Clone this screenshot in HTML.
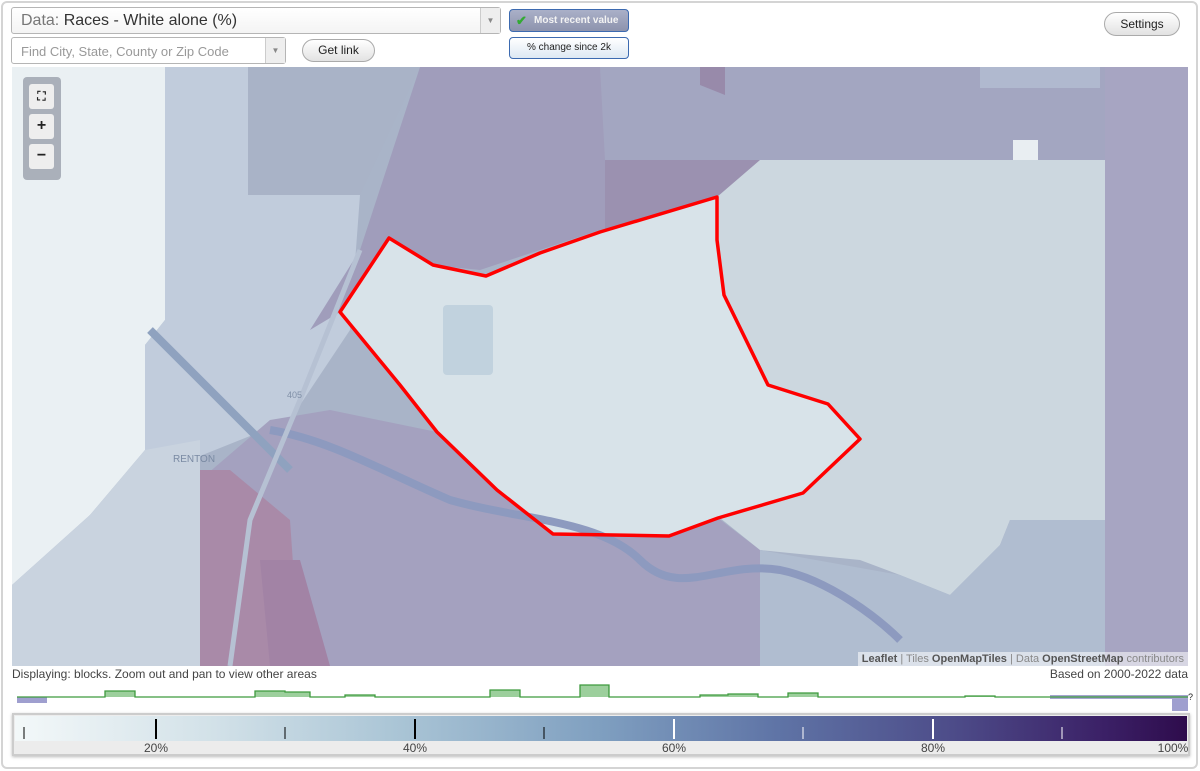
<!DOCTYPE html>
<html><head><meta charset="utf-8"><style>
*{box-sizing:border-box;margin:0;padding:0}
body{width:1200px;height:771px;background:#fff;font-family:"Liberation Sans",Arial,sans-serif;position:relative;overflow:hidden}
.frame{position:absolute;left:1px;top:1px;width:1197px;height:768px;border:2px solid #d4d4d4;border-radius:6px}
.sel{position:absolute;left:11px;top:7px;width:490px;height:27px;border:1px solid #b5b5b5;border-radius:3px;background:linear-gradient(#fff,#f4f4f4);font-size:16px;color:#333;padding:4px 9px}
.sel .lab{color:#777}
.arr{position:absolute;right:0;top:0;width:20px;height:100%;border-left:1px solid #ccc;background:#eee;color:#888;font-size:8px;text-align:center;line-height:25px}
.find{position:absolute;left:11px;top:37px;width:275px;height:27px;border:1px solid #b5b5b5;border-radius:3px;background:#fff;font-size:13px;color:#999;padding:6px 9px}
.btn{position:absolute;border:1px solid #aaa;border-radius:12px;background:linear-gradient(#fff,#e2e2e2);font-size:12px;color:#222;text-align:center}
.mrv{position:absolute;left:509px;top:9px;width:120px;height:23px;border:1px solid #3c6ab0;border-radius:4px;background:linear-gradient(#aab0c8,#8d93ad);color:#f3f3f3;font-size:10px;font-weight:bold;line-height:21px;padding-left:24px}
.pc{position:absolute;left:509px;top:37px;width:120px;height:22px;border:1px solid #3c6ab0;border-radius:4px;background:linear-gradient(#fff,#dde8f3);font-size:10px;color:#222;text-align:center;line-height:20px}
.ctl{position:absolute;left:23px;top:77px;width:38px;height:103px;background:#aab0ba;border-radius:4px}
.ctl div{position:absolute;left:6px;width:25px;height:25px;background:#eee;border-radius:3px;text-align:center;font-weight:bold;font-size:16px;line-height:24px;color:#222}
.attr{position:absolute;right:12px;top:652px;height:14px;background:rgba(255,255,255,.55);font-size:11px;color:#888;padding:0 4px;line-height:14px}
.attr b{color:#555;font-weight:bold}
</style></head><body>
<div class="frame"></div>
<svg style="position:absolute;left:12px;top:67px" width="1176" height="599" viewBox="12 67 1176 599">
<rect x="12" y="67" width="1176" height="599" fill="#a9b4c8"/>
<polygon points="12,67 165,67 165,320 145,345 145,450 90,515 12,585" fill="#eaf0f3"/>
<polygon points="165,67 248,67 248,195 360,195 350,330 290,420 165,470 145,450 145,345 165,320" fill="#c1ccdc"/>
<polygon points="12,585 90,515 145,450 200,440 200,666 12,666" fill="#c9d3df"/>
<polygon points="420,67 605,67 605,160 760,160 740,195 600,230 540,250 480,270 430,265 390,238 340,312 310,330 360,250" fill="#a09dbb"/>
<polygon points="600,67 1105,67 1105,160 760,160 605,160" fill="#a3a6c1"/>
<polygon points="605,160 760,160 740,197 650,215 605,230" fill="#9b91b0"/>
<polygon points="700,67 725,67 725,95 700,85" fill="#988aaa"/>
<polygon points="1105,67 1188,67 1188,666 1105,666" fill="#a7a5c2"/>
<polygon points="980,67 1100,67 1100,88 980,88" fill="#b0b9cf"/>
<rect x="1013" y="140" width="25" height="20" fill="#e9eef2"/>
<polygon points="248,67 420,67 360,195 248,195" fill="#a9b3c7"/>
<polygon points="270,420 330,410 437,432 497,490 553,534 669,536 718,518 760,550 900,600 940,666 200,666 200,480" fill="#a4a1bf"/>
<polygon points="200,470 230,470 290,520 300,666 200,666" fill="#a98aa8"/>
<polygon points="260,560 300,560 330,666 270,666" fill="#a283a5"/>
<polygon points="760,160 780,160 1105,160 1105,520 1010,520 1000,545 950,595 900,575 860,560 760,550 720,518 803,493 860,439 828,404 768,385 724,295 717,240 717,197" fill="#ccd7df"/>
<polygon points="760,550 900,575 950,595 1000,545 1010,520 1105,520 1105,666 760,666" fill="#b0bdd0"/>
<polygon points="389,238 433,265 486,276 540,253 600,232 717,197 717,240 724,295 768,385 828,404 860,439 803,493 718,518 669,536 553,534 497,490 437,432 400,385 340,312" fill="#d8e3e9"/>
<rect x="443" y="305" width="50" height="70" rx="4" fill="#c1d2de"/>
<path d="M270,430 C330,440 380,470 450,500 C520,520 600,520 640,560 C680,600 720,560 780,570 C830,580 880,620 900,640" stroke="#8d9abf" stroke-width="8" fill="none"/>
<path d="M150,330 L290,470" stroke="#8fa2bf" stroke-width="8" fill="none"/>
<path d="M360,250 L300,400 L250,520 L230,666" stroke="#b6c1d3" stroke-width="5" fill="none"/>
<polygon points="389,238 433,265 486,276 540,253 600,232 717,197 717,240 724,295 768,385 828,404 860,439 803,493 718,518 669,536 553,534 497,490 437,432 400,385 340,312" fill="none" stroke="#ff0000" stroke-width="3.5" stroke-linejoin="round"/>
<text x="173" y="462" font-size="10" fill="#7a8aa3" font-family="Liberation Sans">RENTON</text>
<text x="287" y="398" font-size="9" fill="#8090a8" font-family="Liberation Sans">405</text>
</svg>
<div class="ctl"><div style="top:7px;font-size:12px">⛶</div><div style="top:37px">+</div><div style="top:67px">−</div></div>
<div class="attr"><b>Leaflet</b> | Tiles <b>OpenMapTiles</b> | Data <b>OpenStreetMap</b> contributors</div>
<div class="sel"><span class="lab">Data:</span> Races - White alone (%)<div class="arr">▼</div></div>
<div class="find">Find City, State, County or Zip Code<div class="arr">▼</div></div>
<div class="btn" style="left:302px;top:39px;width:73px;height:23px;line-height:21px">Get link</div>
<div class="btn" style="left:1104px;top:12px;width:76px;height:24px;line-height:22px">Settings</div>
<div class="mrv"><span style="position:absolute;left:6px;top:0;color:#3a3;font-size:13px">✔</span>Most recent value</div>
<div class="pc">% change since 2k</div>
<div style="position:absolute;left:12px;top:667px;font-size:12px;color:#444">Displaying: blocks. Zoom out and pan to view other areas</div>
<div style="position:absolute;right:12px;top:667px;font-size:12px;color:#444">Based on 2000-2022 data</div>
<svg style="position:absolute;left:0;top:680px" width="1200" height="32">
<rect x="17" y="17" width="30" height="6" fill="#9f9fcf"/>
<rect x="1172" y="17" width="16" height="14" fill="#9f9fcf"/>
<polyline points="1050,17 1188,17" stroke="#a5a5d0" stroke-width="4"/>
<g fill="#9ccf9c" stroke="#3e9a3e" stroke-width="1.3">
<path d="M17,17 H105 V11 H135 V17 H255 V11 H285 V12 H310 V17 H345 V15 H375 V17 H490 V10 H520 V17 H580 V5 H609 V17 H700 V15 H728 V14 H758 V17 H788 V13 H818 V17 H965 V16 H995 V17 H1188"/>
</g>
<text x="1188" y="20" font-size="9" fill="#222">?</text>
</svg>
<div style="position:absolute;left:12px;top:713px;width:1178px;height:43px;border:2px solid #ccc;background:#ececec;box-shadow:0 1px 3px #bbb">
<div style="position:absolute;left:1px;top:1px;right:1px;height:25px;background:linear-gradient(90deg,#f3f8f9 0%,#d2e1e8 17%,#a9c4d5 33%,#7f9fc0 50%,#5f74a6 65%,#4d4c89 80%,#3b2066 93%,#2e0c4c 100%)"></div>
<svg style="position:absolute;left:0;top:0" width="1174" height="39">
<g stroke-width="1"><line x1="10" y1="12" x2="10" y2="24" stroke="#000"/><line x1="271" y1="12" x2="271" y2="24" stroke="#000"/><line x1="530" y1="12" x2="530" y2="24" stroke="#000"/><line x1="789" y1="12" x2="789" y2="24" stroke="#fff"/><line x1="1048" y1="12" x2="1048" y2="24" stroke="#fff"/></g>
<g stroke-width="2"><line x1="142" y1="4" x2="142" y2="24" stroke="#000"/><line x1="401" y1="4" x2="401" y2="24" stroke="#000"/><line x1="660" y1="4" x2="660" y2="24" stroke="#fff"/><line x1="919" y1="4" x2="919" y2="24" stroke="#fff"/></g>
<g font-size="12" fill="#444" font-family="Liberation Sans" text-anchor="middle"><text x="142" y="37">20%</text><text x="401" y="37">40%</text><text x="660" y="37">60%</text><text x="919" y="37">80%</text><text x="1159" y="37">100%</text></g>
</svg>
</div>
</body></html>
